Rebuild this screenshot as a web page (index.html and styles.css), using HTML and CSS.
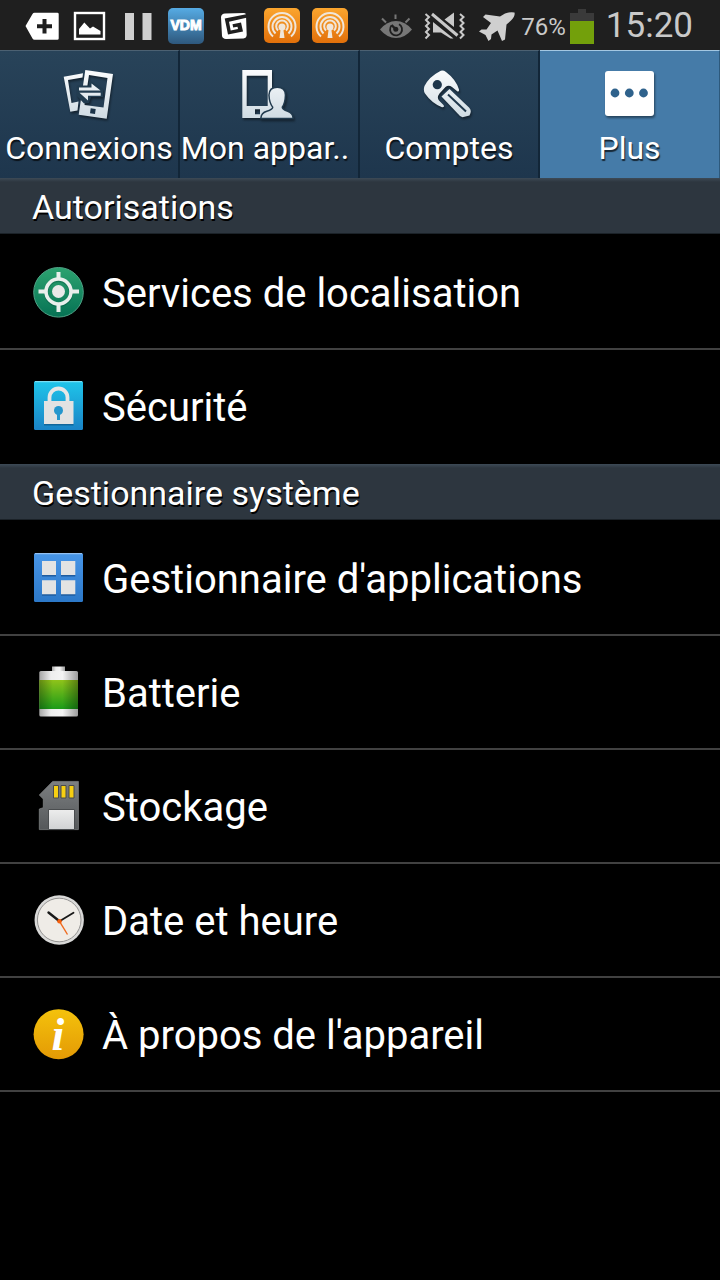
FILE: index.html
```html
<!DOCTYPE html>
<html lang="fr">
<head>
<meta charset="utf-8">
<meta name="viewport" content="width=device-width, initial-scale=1">
<title>Paramètres</title>
<link rel="stylesheet" href="styles.css">
</head>
<body>
<svg class="defs" width="0" height="0" aria-hidden="true">
  <defs>
    <linearGradient id="g-orange" x2="0" y2="1"><stop stop-color="#fba52e"/><stop offset="1" stop-color="#e2700a"/></linearGradient>
    <linearGradient id="g-vdm" x2="0" y2="1"><stop stop-color="#56abe4"/><stop offset="1" stop-color="#2e587d"/></linearGradient>
    <linearGradient id="g-tab" gradientUnits="userSpaceOnUse" x1="0" y1="4" x2="0" y2="52"><stop stop-color="#fbfcfd"/><stop offset="1" stop-color="#cfdbe3"/></linearGradient>
    <linearGradient id="g-green" x2="0" y2="1"><stop stop-color="#2ca370"/><stop offset="1" stop-color="#067254"/></linearGradient>
    <linearGradient id="g-cyan" x2="0" y2="1"><stop stop-color="#1fc5ea"/><stop offset="1" stop-color="#1a83c6"/></linearGradient>
    <linearGradient id="g-blue" x2="0" y2="1"><stop stop-color="#4896e8"/><stop offset="1" stop-color="#2c78c8"/></linearGradient>
    <linearGradient id="g-metal"><stop stop-color="#a5a5a5"/><stop offset=".3" stop-color="#ededed"/><stop offset=".6" stop-color="#f4f4f4"/><stop offset="1" stop-color="#9c9c9c"/></linearGradient>
    <linearGradient id="g-charge" x2="0" y2="1"><stop stop-color="#8fc31a"/><stop offset="1" stop-color="#1b9b18"/></linearGradient>
    <linearGradient id="g-shade"><stop stop-color="#000" stop-opacity=".3"/><stop offset=".35" stop-color="#000" stop-opacity="0"/><stop offset=".6" stop-color="#000" stop-opacity="0"/><stop offset="1" stop-color="#000" stop-opacity=".35"/></linearGradient>
    <linearGradient id="g-card" x2="0" y2="1"><stop stop-color="#7c7f81"/><stop offset="1" stop-color="#55585a"/></linearGradient>
    <linearGradient id="g-label" x2="0" y2="1"><stop stop-color="#ededed"/><stop offset="1" stop-color="#d0d2d3"/></linearGradient>
    <linearGradient id="g-yellow" x2="0" y2="1"><stop stop-color="#f4c20c"/><stop offset="1" stop-color="#e49a05"/></linearGradient>
    <symbol id="podcast" viewBox="0 0 48 50">
      <rect x="6" y="8" width="36" height="35" rx="5" fill="url(#g-orange)"/>
      <g fill="none" stroke="#f0e6da" stroke-width="2">
        <path d="M15 36.500A13.500 13.500 0 1 1 33 36.500"/>
        <path d="M17.500 33.500A9.500 9.500 0 1 1 30.500 33.500"/>
        <path d="M20 30.500A5.800 5.800 0 1 1 28 30.500"/>
      </g>
      <circle cx="24" cy="27" r="3.500" fill="#f0e6da"/>
      <path d="M22.800 28h2.400l1.300 10h-5z" fill="#f0e6da"/>
    </symbol>
  </defs>
</svg>

<header class="status">
  <div class="status-notifications">
    <svg class="slot" viewBox="0 0 48 50"><path fill="#fff" d="M7.500 26 14.500 14Q15.200 12.700 16.500 12.700H39.300Q40.700 12.700 40.700 14V38.400Q40.700 39.700 39.300 39.700H16.500Q15.200 39.700 14.500 38.500Z"/><path d="M19 26.200H34M26.500 19V33.500" stroke="#1f1f1f" stroke-width="4"/></svg>
    <svg class="slot" viewBox="0 0 48 50"><rect x="9" y="13" width="29" height="26" fill="none" stroke="#fff" stroke-width="2.400"/><path fill="#fff" d="M13 34.500V29L18.300 22.500 24 28.500 27 26.500 34.500 31V34.500Z"/></svg>
    <svg class="slot" viewBox="0 0 48 50"><path fill="#cfcfcf" d="M11 13h9v27h-9zM28.500 13h9v27h-9z"/></svg>
    <svg class="slot" viewBox="0 0 48 50"><rect x="6" y="8" width="36" height="36" rx="5" fill="url(#g-vdm)"/><text class="vdm" x="24" y="30">VDM</text></svg>
    <svg class="slot" viewBox="0 0 48 50"><path fill="#fff" d="M15 13.500 34 13Q36 13 36 15L36.700 35Q36.500 38 33.500 38.500L16 39Q12.500 38.500 12 36L11 17Q11.500 13.800 15 13.500Z"/><path fill="#1f1f1f" d="M37.500 14 14.700 18.500 18 34.500 33 31.500 31 22.500 22.500 24.300 23.200 27.500 27.500 26.700 28 29 20.700 30.500 19 21.800 37.500 17.500Z"/></svg>
    <svg class="slot"><use href="#podcast"/></svg>
    <svg class="slot"><use href="#podcast"/></svg>
  </div>
  <div class="status-system">
    <svg width="32" height="50" viewBox="0 0 32 50"><path fill="#777" d="M0 29.500Q7 21 16 21T32 29.500Q25 38 16 38T0 29.500Z"/><path d="M15.500 14.500v4.500M2 18.500l4 4M29.500 18.500l-4 4" stroke="#777" stroke-width="2"/><path d="M19 24.200a6 6 0 1 1-7.500 1.300" fill="none" stroke="#1f1f1f" stroke-width="1.800"/><circle cx="15.800" cy="29.300" r="2.500" fill="#1f1f1f"/><path d="M11.500 25l4.500 4.500" stroke="#1f1f1f" stroke-width="2.400"/></svg>
    <svg width="42" height="50" viewBox="0 0 42 50"><path fill="none" stroke="#c9c9c9" stroke-width="2" d="M1.500 14l3.500 3-3 3 3 3-3 3 3 3-3 3 3 3-3.500 3.500M36 14l3.500 3-3 3 3 3-3 3 3 3-3 3 3 3-3.500 3.500"/><path fill="#c9c9c9" d="M9 22 29.500 38.500H26.500L17 32.500H9ZM20.500 19.500 30 12.500V27Z"/><path stroke="#c9c9c9" stroke-width="3" d="M8 14 33.500 35.500"/></svg>
    <svg width="37" height="50" viewBox="0 0 37 50"><path fill="#cfcfcf" d="M36.500 12.500Q37.500 16 33 20.500L28.500 24.500 27 39.500 24 41 19.500 30.500 13.500 34.500 13 39 10.500 41 7.500 35 1 31.500 3.500 29.500 8.500 29.500 13 23 5 17 7.500 14.500 22 16.500 27 13.500Q32.500 11.500 36.500 12.500Z"/></svg>
    <span class="percent">76%</span>
    <svg width="24" height="50" viewBox="0 0 24 50"><path fill="#3a3a3a" d="M0 13h8V9h8v4h8v31H0z"/><path fill="#73a00b" d="M0 21h24v23H0z"/></svg>
    <time class="clock">15:20</time>
  </div>
</header>

<nav class="tabs" role="tablist">
  <button class="tab" role="tab" aria-selected="false">
    <svg class="tab-icon" viewBox="0 0 56 56"><g fill="url(#g-tab)"><path fill-rule="evenodd" d="M2.700 10.700 22 7.300 21.500 11.500 7 14 10.500 37 17.500 35.500 16.500 44.500 9.300 45.700Z"/><path fill-rule="evenodd" d="M24.300 4 52 8 45.700 52.700 17.700 48.700ZM28 9 23.500 39 42.500 41.500 46.500 12Z"/></g><path fill="#1b3348" d="M29.700 42.300l5 .7-.700 5-5-.7z"/><path fill="#223c50" d="M16 19.500h12v-5L42 23v8H30l-2 6-5 .5L16 30z"/><path fill="url(#g-tab)" d="M18 21.500H30.500V17.500L39.500 24.500H18ZM18.500 26.700H39.700V29.700H27V34.500Z"/></svg>
    <span>Connexions</span>
  </button>
  <button class="tab" role="tab" aria-selected="false">
    <svg class="tab-icon" viewBox="0 0 56 56"><path fill="url(#g-tab)" fill-rule="evenodd" d="M1.300 4H31V52H1.300ZM5.700 9.700V40H26.700V9.700ZM14 43.300v5h5v-5z"/><path fill="url(#g-tab)" stroke="#213a4e" stroke-width="3" paint-order="stroke" d="M20.700 51.700Q21 47.500 26 46 32.500 44 32.500 41 29 37 28.700 29 29 22 36.300 22T43.700 29Q43.500 37 40.500 41 40.500 44 46.500 46 51 47.500 51.300 51.700Z"/></svg>
    <span class="tab-label-long">Mon appar..</span>
  </button>
  <button class="tab" role="tab" aria-selected="false">
    <svg class="tab-icon" viewBox="0 0 56 56"><path fill="url(#g-tab)" d="M18.500 5.500Q21.500 3.500 25 6 35 13.500 38 23.500 38.300 26 36.500 25.500L31 21Q27.500 18.500 24.500 21L18.500 27.500Q15.500 31.500 18 34.500L22.500 39Q24 41.500 21 41.300 10.500 37 4 27.500 2 24.500 3.500 20 8.500 10.500 18.500 5.500Z"/><circle cx="16.300" cy="18.700" r="4.600" fill="#1e364b"/><path fill="url(#g-tab)" d="M20.500 30.500 28.500 23 48 41.500Q50.500 44 49.500 47L48.500 49.500 41.500 51.200 39 50Z"/><path d="M27 28.500 45 45.500" stroke="#20384c" stroke-width="2"/></svg>
    <span>Comptes</span>
  </button>
  <button class="tab tab-active" role="tab" aria-selected="true">
    <svg class="tab-icon" viewBox="0 0 56 56"><rect x="3" y="5" width="49" height="45" rx="3" fill="#fff"/><g fill="#2f628c"><circle cx="13" cy="27" r="4.400"/><circle cx="27.300" cy="27" r="4.400"/><circle cx="41.500" cy="27" r="4.400"/></g></svg>
    <span>Plus</span>
  </button>
</nav>

<main>
  <section>
    <h2 class="heading">Autorisations</h2>
    <ul class="list">
      <li><a class="row" href="#localisation">
        <svg class="icon" viewBox="0 0 52 52"><circle cx="26.500" cy="26.300" r="24.800" fill="url(#g-green)" stroke="#4fa286" stroke-width="1"/><circle cx="26.500" cy="26.500" r="12.500" fill="none" stroke="#06583f" stroke-opacity=".5" stroke-width="4"/><g fill="none" stroke="#e9efec" stroke-width="4"><circle cx="26.500" cy="25.500" r="12.500" stroke-width="3.600"/><path d="M26.500 6v8M26.500 37v9M6.500 25.500h8M38.500 25.500h8.500"/></g><circle cx="26.500" cy="25.500" r="6.500" fill="#e9e9e9"/></svg>
        <span class="row-label">Services de localisation</span></a></li>
      <li><a class="row" href="#securite">
        <svg class="icon" viewBox="0 0 52 52"><rect x="2" y="1" width="49" height="49" rx="1.500" fill="url(#g-cyan)"/><path d="M3 1.700h47" stroke="#8fe3f6"/><path d="M12 44.500h29.500" stroke="#12669b" stroke-width="2"/><path d="M17.500 23v-5.500a9 9 0 0 1 18 0V23" fill="none" stroke="#e6e6e6" stroke-width="3.800"/><path fill="#e2e2e2" d="M12 21h29.500v23H12z"/><circle cx="26.500" cy="30.500" r="4.500" fill="#2496cd"/><path d="M26.500 32v8" stroke="#2496cd" stroke-width="3"/></svg>
        <span class="row-label">Sécurité</span></a></li>
    </ul>
  </section>
  <section>
    <h2 class="heading">Gestionnaire système</h2>
    <ul class="list">
      <li><a class="row" href="#applications">
        <svg class="icon" viewBox="0 0 52 52"><rect x="2" y="1" width="49" height="49" rx="1.500" fill="url(#g-blue)"/><path d="M3 1.700h47" stroke="#a3cbf4"/><path fill="#1f5c9f" d="M10 23h14v1.500H10zM29 23h14.300v1.500H29zM10 42h14v1.700H10zM29 42h14.300v1.700H29z"/><path fill="#e3e3e3" d="M10 9h14v14H10zM29 9h14.300v14H29zM10 28.300h14v14H10zM29 28.300h14.300v14H29z"/></svg>
        <span class="row-label">Gestionnaire d'applications</span></a></li>
      <li><a class="row" href="#batterie">
        <svg class="icon" viewBox="0 0 52 52"><path fill="url(#g-metal)" d="M20 0.500h13V5H20z"/><rect x="7.300" y="5" width="38.700" height="45.500" rx="1.500" fill="url(#g-metal)"/><path fill="url(#g-charge)" d="M7.300 14H46V43H7.300z"/><path fill="url(#g-shade)" d="M7.300 14H46V43H7.300z"/></svg>
        <span class="row-label">Batterie</span></a></li>
      <li><a class="row" href="#stockage">
        <svg class="icon" viewBox="0 0 52 52"><path fill="url(#g-card)" stroke="#85888a" stroke-width=".7" d="M20.700 1.400H46.400V49.600H7.300V29L11.300 27.700V19L7.300 15Z"/><path fill="#f7cf12" stroke="#494b4d" d="M21.500 5.500h5v12.500h-5zM29 5.500h5v12.500h-5zM37 5.500h5v12.500h-5z"/><path fill="url(#g-label)" stroke="#4a4d4f" d="M16.500 29.500h26v20h-26z"/></svg>
        <span class="row-label">Stockage</span></a></li>
      <li><a class="row" href="#date">
        <svg class="icon" viewBox="0 0 52 52"><circle cx="27.200" cy="26" r="24.700" fill="#d9d9d8"/><circle cx="27.200" cy="26" r="21.800" fill="#efece7" stroke="#949392" stroke-width="1"/><path d="M16.500 18.500 27.500 27.300" stroke="#191919" stroke-width="2.400" stroke-linecap="round"/><path d="M27.500 27.300 41.500 18.700" stroke="#191919" stroke-width="1.800" stroke-linecap="round"/><path d="M27.500 27.300 35.500 40.500" stroke="#ef6a1e" stroke-width="1.400"/><circle cx="27.500" cy="27.300" r="2.300" fill="#f4600f"/></svg>
        <span class="row-label">Date et heure</span></a></li>
      <li><a class="row" href="#appareil">
        <svg class="icon" viewBox="0 0 52 52"><circle cx="26.600" cy="26.200" r="25" fill="url(#g-yellow)"/><text class="info" x="26" y="42">i</text></svg>
        <span class="row-label">À propos de l'appareil</span></a></li>
    </ul>
  </section>
</main>
</body>
</html>
```

FILE: styles.css
```css
* { box-sizing: border-box; }

body {
  margin: 0;
  min-height: 100vh;
  background: #000;
  color: #fff;
  font-family: Roboto, "Noto Sans", sans-serif;
}

svg { display: block; flex: none; }
.defs { position: absolute; }

/* Status bar */
.status {
  display: flex;
  justify-content: space-between;
  height: 50px;
  padding: 0 27px 0 18px;
  background: #1f1f1f;
  color: #c9c9c9;
}
.status-notifications { display: flex; }
.slot { width: 48px; height: 50px; }
.status-system {
  display: flex;
  align-items: center;
  gap: 12px;
}
.percent { margin: 0 -8px 0 -6px; padding-top: 3px; font-size: 24px; line-height: 28px; }
.clock { padding-top: 2px; font-size: 35px; line-height: 44px; }
.vdm {
  fill: #fff;
  stroke: #fff;
  stroke-width: 1px;
  font: bold 14px "Liberation Sans", sans-serif;
  text-anchor: middle;
}

/* Tabs */
.tabs {
  display: grid;
  grid-template-columns: repeat(4, minmax(0, 1fr));
}
.tab {
  display: flex;
  flex-direction: column;
  align-items: center;
  gap: 8px;
  height: 128px;
  padding: 15px 0 0;
  border: 0;
  border-top: 1px solid #4c6172;
  border-right: 2px solid #122638;
  background: linear-gradient(#284359, #1e364d);
  color: #fff;
  font: 32px/36px Roboto, "Noto Sans", sans-serif;
  text-shadow: 1px 2px 1px #000000b0;
  white-space: nowrap;
}
.tab-active {
  border-top-color: #a3c7e2;
  border-right: 1px solid #2d597c;
  background: #457ba8;
}
.tab-icon {
  width: 56px;
  height: 56px;
  filter: drop-shadow(1px 2px 1px #00000070);
}
.tab-label-long { padding-right: 8px; }

/* Settings list */
.heading {
  margin: 0 0 2px;
  height: 56px;
  padding: 2px 32px 0;
  border-bottom: 1px solid #1b2228;
  background: linear-gradient(#3d4a56, #2d363f 4px);
  font-size: 34px;
  font-weight: 400;
  line-height: 54px;
  text-shadow: 1px 2px 0 #000;
}
.list { margin: 0; padding: 0; list-style: none; }
.row {
  display: flex;
  align-items: center;
  gap: 18px;
  height: 114px;
  padding: 0 32px;
  border-bottom: 2px solid #414141;
  color: #fff;
  font-size: 40px;
  line-height: 48px;
  text-decoration: none;
}
.row-label { padding-top: 4px; }
section:first-child li:last-child .row { border-bottom-color: transparent; }
.icon { width: 52px; height: 52px; }
.info {
  fill: #fff;
  font: italic bold 46px "Liberation Serif", serif;
  text-anchor: middle;
}
```
